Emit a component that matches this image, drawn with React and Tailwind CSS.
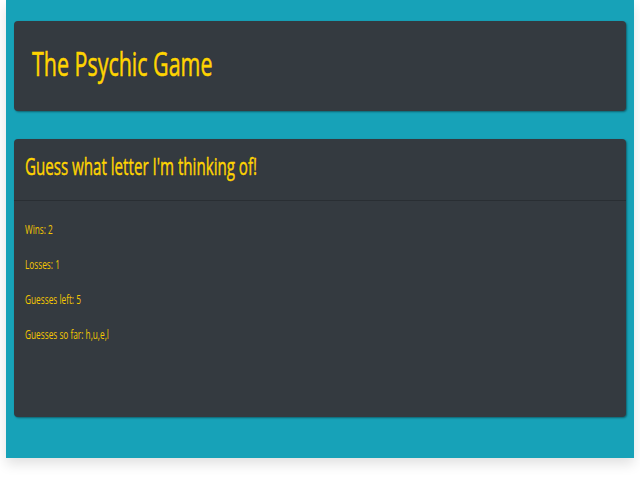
import React from 'react';

const stats = [
  { label: 'Wins', value: '2' },
  { label: 'Losses', value: '1' },
  { label: 'Guesses left', value: '5' },
  { label: 'Guesses so far', value: 'h,u,e,l' },
];

const App = () => {
  return (
    <div className="w-[640px] h-[480px] bg-white font-['Open_Sans',sans-serif]">
      <div className="ml-[6px] w-[628px] h-[458px] bg-[#17a2b8] px-2 pt-[21px] shadow-[0_6px_12px_rgba(0,0,0,0.12)]">
        <div className="h-[90px] rounded bg-[#343a40] flex items-center pl-[18px] pb-[5px] shadow-[1px_1px_2px_rgba(0,0,0,0.4)]">
          <h1 className="inline-block origin-left scale-x-[0.67] text-[32px] leading-none text-[#ffd400] whitespace-nowrap [-webkit-text-stroke:0.6px_#ffd400] [text-shadow:0_0_1px_#1c2350]">
            The Psychic Game
          </h1>
        </div>

        <div className="mt-[28px] h-[278px] rounded bg-[#343a40] shadow-[1px_1px_2px_rgba(0,0,0,0.4)]">
          <div className="h-[62px] flex items-center px-[11px] pb-[8px] border-b border-black/20">
            <h2 className="inline-block origin-left scale-x-[0.63] text-[24px] leading-none text-[#ffd400] whitespace-nowrap [-webkit-text-stroke:0.5px_#ffd400] [text-shadow:0_0_1px_#1c2350]">
              Guess what letter I'm thinking of!
            </h2>
          </div>
          <div className="px-[11px] pt-[21px] flex flex-col gap-[19px]">
            {stats.map((s) => (
              <p
                key={s.label}
                className="origin-left scale-x-[0.69] text-[12px] leading-[16px] text-[#f5c800] whitespace-nowrap"
              >
                {s.label}: {s.value}
              </p>
            ))}
          </div>
        </div>
      </div>
    </div>
  );
};

export default App;
